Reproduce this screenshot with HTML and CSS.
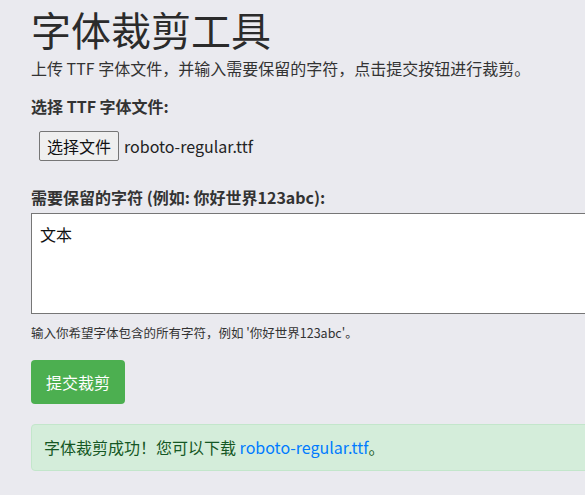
FILE: index.html
```html
<!DOCTYPE html>
<html lang="zh-CN">
<head>
  <meta charset="UTF-8">
  <meta name="viewport" content="width=device-width, initial-scale=1.0">
  <title>字体裁剪工具</title>
  <link rel="stylesheet" href="styles.css">
</head>
<body>
  <div class="container">
    <h1>字体裁剪工具</h1>
    <p class="intro">上传 TTF 字体文件，并输入需要保留的字符，点击提交按钮进行裁剪。</p>

    <form class="crop-form">
      <div class="field">
        <label class="field-label">选择 TTF 字体文件:</label>
        <div class="file-row">
          <span class="file-btn">选择文件</span>
          <span class="file-name">roboto-regular.ttf</span>
        </div>
      </div>

      <div class="field">
        <label class="field-label">需要保留的字符 (例如: 你好世界123abc):</label>
        <textarea class="chars">文本</textarea>
        <small class="hint">输入你希望字体包含的所有字符，例如 '你好世界123abc'。</small>
      </div>

      <button type="button" class="submit">提交裁剪</button>
    </form>

    <div class="alert">字体裁剪成功！您可以下载 <a href="#">roboto-regular.ttf</a>。</div>
  </div>
</body>
</html>
```

FILE: styles.css
```css
body {
  margin: 0;
  font-family: "Noto Sans CJK SC", "Open Sans", sans-serif;
  background: #eaeaef;
  color: #333;
  overflow: hidden;
}
.container {
  padding: 0 0 0 31px;
}
h1 {
  margin: 0;
  font-size: 40px;
  font-weight: 400;
  line-height: 58px;
  color: #2b2b2b;
}
.intro {
  margin: -2px 0 0;
  font-size: 16px;
  line-height: 24px;
}
.crop-form {
  margin-top: 14px;
}
.field {
  margin-bottom: 18px;
}
.field:first-child {
  margin-bottom: 24px;
}
.field-label {
  display: block;
  font-size: 16px;
  font-weight: 700;
  line-height: 24px;
  margin-bottom: 4px;
}
.file-row {
  display: flex;
  align-items: center;
  gap: 5px;
  margin-top: 13px;
  padding-left: 8px;
}
.file-btn {
  border: 1px solid #767676;
  border-radius: 2px;
  background: #efefef;
  color: #111;
  font-size: 16px;
  line-height: 22px;
  padding: 3px 7px;
}
.file-name {
  font-size: 16px;
  color: #222;
}
.chars {
  display: block;
  box-sizing: border-box;
  width: 610px;
  height: 101px;
  border: 1px solid #767676;
  border-radius: 0;
  padding: 8px;
  font-family: inherit;
  font-size: 16px;
  line-height: 24px;
  color: #111;
  background: #fff;
  resize: none;
}
.hint {
  display: block;
  margin-top: 10px;
  font-size: 12.5px;
  line-height: 18px;
  color: #333;
}
.submit {
  background: #4caf50;
  color: #fff;
  border: none;
  border-radius: 4px;
  padding: 10px 15px;
  font-family: inherit;
  font-size: 16px;
  line-height: 24px;
  cursor: pointer;
}
.alert {
  width: 610px;
  box-sizing: border-box;
  margin-top: 20px;
  background: #d4edda;
  border: 1px solid #c3e6cb;
  border-radius: 4px;
  color: #155724;
  padding: 10px 12px;
  font-size: 16px;
  line-height: 25px;
}
.alert a {
  color: #007bff;
  text-decoration: none;
}
```
